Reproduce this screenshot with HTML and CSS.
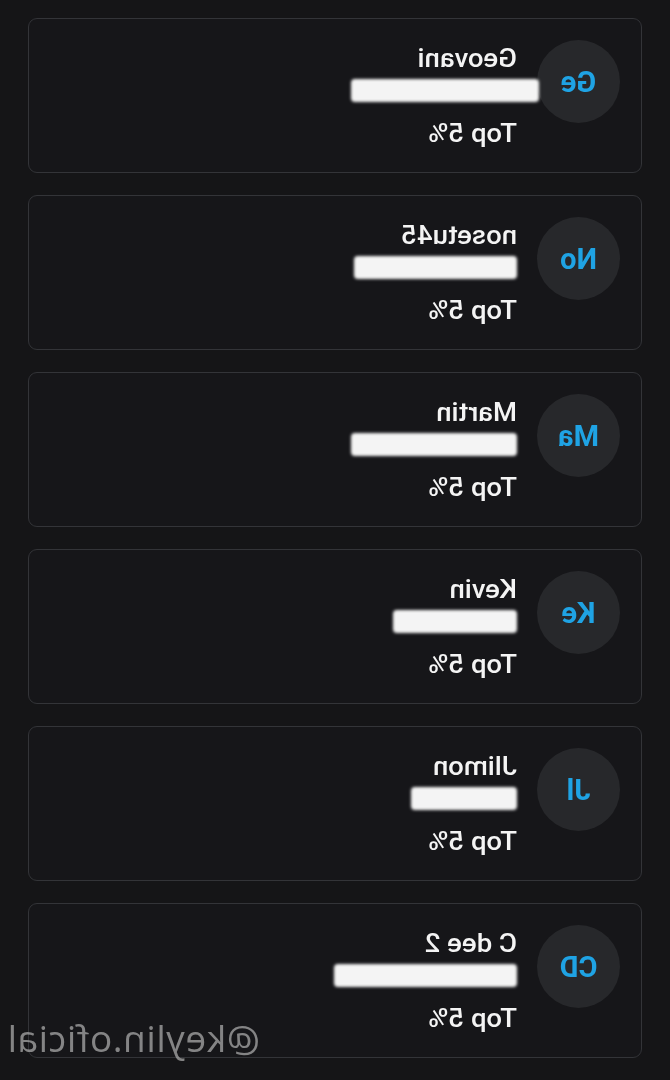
FILE: index.html
```html
<!DOCTYPE html>
<html>
<head>
<meta charset="utf-8">
<link rel="stylesheet" href="styles.css">
</head>
<body>
<div class="page">
  <div class="list">
    <div class="card">
      <div class="avatar">Ge</div>
      <div class="info">
        <div class="name"><span class="txt">Geovani</span></div>
        <div class="redact" style="width:188px;margin-left:-22px"></div>
        <div class="rank"><span class="txt">Top 5%</span></div>
      </div>
    </div>
    <div class="card">
      <div class="avatar">No</div>
      <div class="info">
        <div class="name"><span class="txt">nosetu45</span></div>
        <div class="redact" style="width:163px"></div>
        <div class="rank"><span class="txt">Top 5%</span></div>
      </div>
    </div>
    <div class="card">
      <div class="avatar">Ma</div>
      <div class="info">
        <div class="name"><span class="txt">Martin</span></div>
        <div class="redact" style="width:166px"></div>
        <div class="rank"><span class="txt">Top 5%</span></div>
      </div>
    </div>
    <div class="card">
      <div class="avatar">Ke</div>
      <div class="info">
        <div class="name"><span class="txt">Kevin</span></div>
        <div class="redact" style="width:124px"></div>
        <div class="rank"><span class="txt">Top 5%</span></div>
      </div>
    </div>
    <div class="card">
      <div class="avatar">Jl</div>
      <div class="info">
        <div class="name"><span class="txt">Jlimon</span></div>
        <div class="redact" style="width:106px"></div>
        <div class="rank"><span class="txt">Top 5%</span></div>
      </div>
    </div>
    <div class="card">
      <div class="avatar">CD</div>
      <div class="info">
        <div class="name"><span class="txt">C dee 2</span></div>
        <div class="redact" style="width:183px"></div>
        <div class="rank"><span class="txt">Top 5%</span></div>
      </div>
    </div>
  </div>
  <div class="watermark">@keylin.oficial</div>
</div>
</body>
</html>
```
FILE: styles.css
```css
html, body {
  margin: 0;
  padding: 0;
  background: #151517;
}
.page {
  position: relative;
  width: 670px;
  height: 1080px;
  overflow: hidden;
  transform: scaleX(-1);
  font-family: Roboto, "Liberation Sans", Arial, sans-serif;
}
.list {
  display: flex;
  flex-direction: column;
  gap: 22px;
  padding: 18px 28px 0 28px;
}
.card {
  box-sizing: border-box;
  height: 155px;
  display: flex;
  align-items: flex-start;
  gap: 20px;
  padding: 21px 21px;
  background: #161619;
  border: 1px solid #333438;
  border-radius: 9px;
}
.avatar {
  flex: none;
  width: 83px;
  height: 83px;
  border-radius: 50%;
  background: #27282b;
  color: #1fa3e4;
  font-size: 29px;
  font-weight: 700;
  display: flex;
  align-items: center;
  justify-content: center;
}
.info {
  display: flex;
  flex-direction: column;
  align-items: flex-start;
  padding-top: 5px;
}
.name, .rank {
  color: #f4f4f4;
  font-size: 25px;
  font-weight: 500;
  line-height: 28px;
}
.txt {
  display: inline-block;
  transform: scaleX(1.1);
  transform-origin: left center;
}
.redact {
  height: 23px;
  margin-top: 6px;
  margin-bottom: 18px;
  background: #f4f4f4;
  border-radius: 4px;
  filter: blur(1.5px);
}
.watermark {
  position: absolute;
  left: 410px;
  top: 1012px;
  font-family: "Open Sans", sans-serif;
  font-size: 37px;
  color: rgba(170, 170, 170, 0.75);
  letter-spacing: 0.6px;
}
```
